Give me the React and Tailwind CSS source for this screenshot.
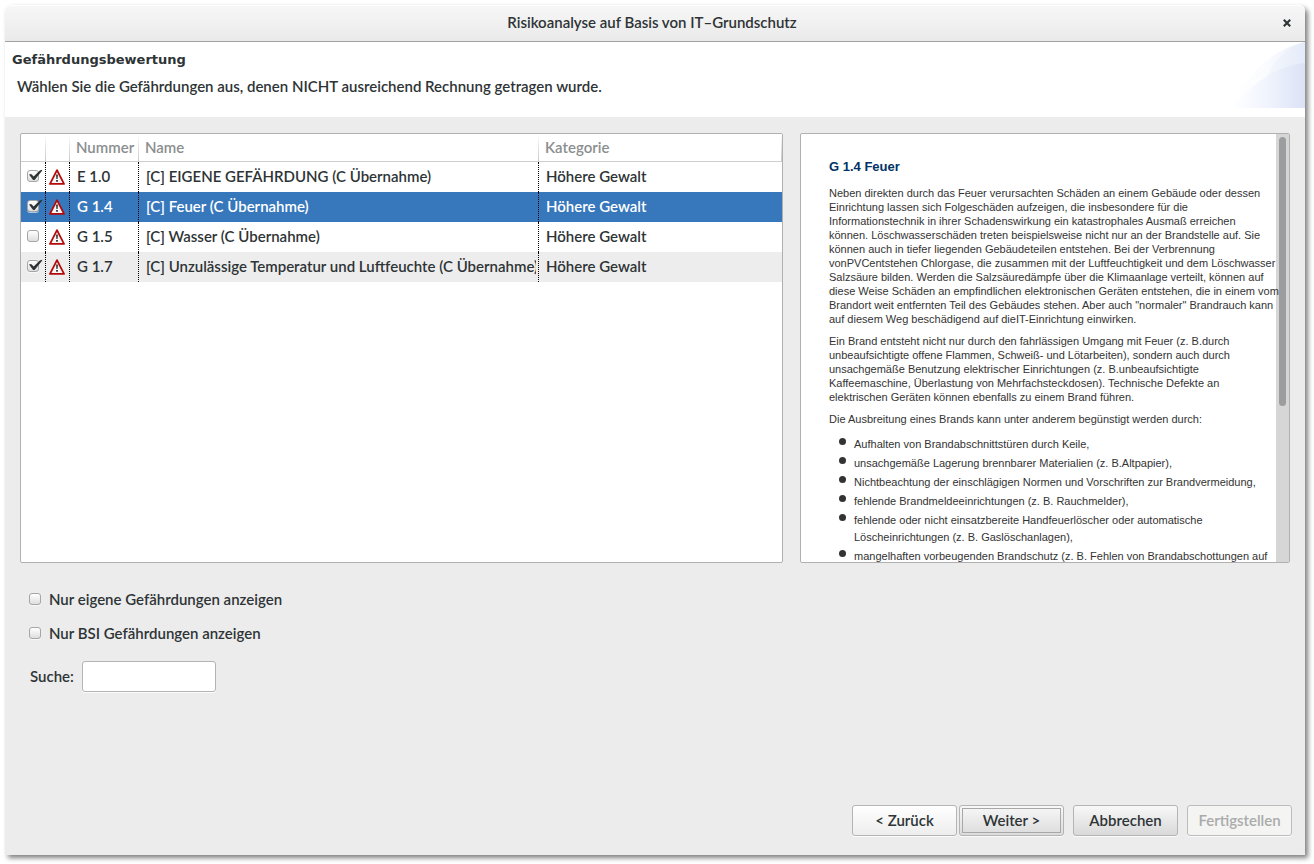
import { useState } from 'react';

const THREATS = [
  { id: 'E 1.0', name: '[C] EIGENE GEFÄHRDUNG (C Übernahme)', category: 'Höhere Gewalt', checked: true },
  { id: 'G 1.4', name: '[C] Feuer (C Übernahme)', category: 'Höhere Gewalt', checked: true },
  { id: 'G 1.5', name: '[C] Wasser (C Übernahme)', category: 'Höhere Gewalt', checked: false },
  { id: 'G 1.7', name: '[C] Unzulässige Temperatur und Luftfeuchte (C Übernahme)', category: 'Höhere Gewalt', checked: true },
];

const PARAGRAPHS = [
  [
    'Neben direkten durch das Feuer verursachten Schäden an einem Gebäude oder dessen',
    'Einrichtung lassen sich Folgeschäden aufzeigen, die insbesondere für die',
    'Informationstechnik in ihrer Schadenswirkung ein katastrophales Ausmaß erreichen',
    'können. Löschwasserschäden treten beispielsweise nicht nur an der Brandstelle auf. Sie',
    'können auch in tiefer liegenden Gebäudeteilen entstehen. Bei der Verbrennung',
    'vonPVCentstehen Chlorgase, die zusammen mit der Luftfeuchtigkeit und dem Löschwasser',
    'Salzsäure bilden. Werden die Salzsäuredämpfe über die Klimaanlage verteilt, können auf',
    'diese Weise Schäden an empfindlichen elektronischen Geräten entstehen, die in einem vom',
    'Brandort weit entfernten Teil des Gebäudes stehen. Aber auch "normaler" Brandrauch kann',
    'auf diesem Weg beschädigend auf dieIT-Einrichtung einwirken.',
  ],
  [
    'Ein Brand entsteht nicht nur durch den fahrlässigen Umgang mit Feuer (z. B.durch',
    'unbeaufsichtigte offene Flammen, Schweiß- und Lötarbeiten), sondern auch durch',
    'unsachgemäße Benutzung elektrischer Einrichtungen (z. B.unbeaufsichtigte',
    'Kaffeemaschine, Überlastung von Mehrfachsteckdosen). Technische Defekte an',
    'elektrischen Geräten können ebenfalls zu einem Brand führen.',
  ],
  ['Die Ausbreitung eines Brands kann unter anderem begünstigt werden durch:'],
];

const BULLETS = [
  ['Aufhalten von Brandabschnittstüren durch Keile,'],
  ['unsachgemäße Lagerung brennbarer Materialien (z. B.Altpapier),'],
  ['Nichtbeachtung der einschlägigen Normen und Vorschriften zur Brandvermeidung,'],
  ['fehlende Brandmeldeeinrichtungen (z. B. Rauchmelder),'],
  ['fehlende oder nicht einsatzbereite Handfeuerlöscher oder automatische', 'Löscheinrichtungen (z. B. Gaslöschanlagen),'],
  ['mangelhaften vorbeugenden Brandschutz (z. B. Fehlen von Brandabschottungen auf'],
];

function Lines({ lines }) {
  return lines.map((line) => (
    <span key={line} className="block whitespace-nowrap">
      {line}
    </span>
  ));
}

function CheckBox({ id, label, checked, onChange }) {
  return (
    <span className="relative block size-3 shrink-0">
      <input
        id={id}
        type="checkbox"
        aria-label={label}
        checked={checked}
        onChange={onChange}
        className="peer block size-3 appearance-none rounded-[3px] border border-[#a6a6a6] bg-linear-to-b from-white to-[#dedede] shadow-[0_1px_0_#ffffff99]"
      />
      <svg viewBox="0 0 15 13" className="pointer-events-none absolute -top-px left-0.5 hidden h-[13px] w-[15px] peer-checked:block" aria-hidden="true">
        <path d="M0 5.6 2.1 4.9 4.7 7.6 10.8 1.4 13.2 0.8 13.1 1.7 5.6 10.9 4.1 11Z" fill="#2e3436" />
      </svg>
    </span>
  );
}

function WarningIcon() {
  return (
    <svg viewBox="0 0 16 16" className="block size-4" role="img" aria-label="Gefährdung">
      <path d="M8 1.1 15 14.9H1Z" fill="#f6f6f6" stroke="#b40a0a" strokeWidth="1.8" strokeLinejoin="round" />
      <path d="M7.1 5.6H8.9L8.6 10H7.4Z" fill="#303030" />
      <rect x="7.1" y="11" width="1.8" height="1.7" fill="#303030" />
    </svg>
  );
}

function BannerArt() {
  return (
    <svg viewBox="0 0 74 66" className="block h-[66px] w-[74px] shrink-0" aria-hidden="true">
      <defs>
        <linearGradient id="outer">
          <stop offset="0" stopColor="#ffffff" />
          <stop offset="0.5" stopColor="#fafbfe" />
          <stop offset="1" stopColor="#e8eefa" />
        </linearGradient>
        <linearGradient id="middle">
          <stop offset="0" stopColor="#fafbfe" />
          <stop offset="1" stopColor="#e4ebf9" />
        </linearGradient>
        <linearGradient id="inner">
          <stop offset="0" stopColor="#ffffff" />
          <stop offset="0.45" stopColor="#f1f5fd" />
          <stop offset="1" stopColor="#dbe2f6" />
        </linearGradient>
      </defs>
      <path d="M1 66C14 35 38 8 74 0V66Z" fill="url(#outer)" />
      <path d="M24 66C32 36 46 7 74 0V66Z" fill="url(#middle)" />
      <path d="M1 66C20 43 42 25 74 21V66Z" fill="url(#inner)" />
    </svg>
  );
}

function HeaderCell({ children }) {
  return (
    <th scope="col" className="relative h-7 border-b border-[#cfcfcf] px-1.5 pb-0.5 text-left font-semibold text-[#8b8e8f]">
      {children}
      <span className="absolute inset-y-0 right-0 w-px bg-linear-to-b from-white to-[#c8c8c8]" />
    </th>
  );
}

const BUTTON = 'h-[31px] w-[105px] rounded-[3px] border shadow-[0_1px_0_#ffffffcc]';

export default function App() {
  const [threats, setThreats] = useState(THREATS);
  const [selected, setSelected] = useState('G 1.4');
  const [onlyOwn, setOnlyOwn] = useState(false);
  const [onlyBsi, setOnlyBsi] = useState(false);

  const toggle = (id) => setThreats(threats.map((t) => (t.id === id ? { ...t, checked: !t.checked } : t)));

  return (
    <div className="flex min-h-screen bg-white pt-[5px] pr-[9px] pb-[9px] pl-[5px] font-['Lato',sans-serif] text-[15px] leading-5 font-semibold text-[#2e3436]">
      <div className="flex min-w-0 flex-1 flex-col rounded-t-md bg-[#ececec] shadow-[3px_3px_5px_0_#00000080]">
        <div className="flex h-[37px] items-center rounded-t-md border-b border-[#a1a1a1] bg-linear-to-b from-[#f7f7f7] to-[#eaeaea] shadow-[inset_0_1px_0_#fff]">
          <h1 className="flex-1 pb-0.5 pl-[30px] text-center">Risikoanalyse auf Basis von IT–Grundschutz</h1>
          <button type="button" aria-label="Schließen" className="flex h-full w-9 items-center justify-center">
            <svg viewBox="0 0 8 8" className="size-2" aria-hidden="true">
              <path d="M0.8 0.8 7.2 7.2M7.2 0.8 0.8 7.2" stroke="#2e3436" strokeWidth="2.1" />
            </svg>
          </button>
        </div>

        <header className="flex h-[75px] items-start justify-between bg-white">
          <div className="pt-2">
            <h2 className="pl-[7px] font-['DejaVu_Sans',sans-serif] text-[13px] leading-5 font-bold">Gefährdungsbewertung</h2>
            <p className="pt-1.5 pl-3">Wählen Sie die Gefährdungen aus, denen NICHT ausreichend Rechnung getragen wurde.</p>
          </div>
          <BannerArt />
        </header>

        <main className="flex flex-1 flex-col px-[15px] pt-4">
          <div className="grid grid-cols-[763fr_490fr] gap-[17px]">
            <div className="h-[430px] min-w-0 overflow-hidden rounded-xs border border-[#b0b0b0] bg-white">
              <table className="w-full table-fixed border-separate border-spacing-0">
                <colgroup>
                  <col className="w-[25px]" />
                  <col className="w-6" />
                  <col className="w-[69px]" />
                  <col className="w-[400px]" />
                  <col />
                </colgroup>
                <thead>
                  <tr>
                    <HeaderCell />
                    <HeaderCell />
                    <HeaderCell>Nummer</HeaderCell>
                    <HeaderCell>Name</HeaderCell>
                    <HeaderCell>Kategorie</HeaderCell>
                  </tr>
                </thead>
                <tbody>
                  {threats.map((t) => (
                    <tr
                      key={t.id}
                      onClick={() => setSelected(t.id)}
                      className={t.id === selected ? 'bg-[#3777bc] text-white' : t.id === 'G 1.7' ? 'bg-[#ededed]' : 'bg-white'}
                    >
                      <td className="h-[30px] border-r border-dotted border-black pb-0.5 pl-1.5">
                        <CheckBox label={t.id} checked={t.checked} onChange={() => toggle(t.id)} />
                      </td>
                      <td className="border-r border-dotted border-black pl-[3px]">
                        <WarningIcon />
                      </td>
                      <td className="border-r border-dotted border-black pb-0.5 pl-[7px]">{t.id}</td>
                      <td className="border-r border-dotted border-black pr-0.5 pb-0.5 pl-[7px]">
                        <div className="overflow-hidden whitespace-nowrap">{t.name}</div>
                      </td>
                      <td className="pb-0.5 pl-[7px]">{t.category}</td>
                    </tr>
                  ))}
                </tbody>
              </table>
            </div>

            <div className="flex h-[430px] min-w-0 overflow-hidden rounded-xs border border-[#b0b0b0] bg-white">
              <article className="relative z-10 min-w-0 flex-1 pt-[25px] pl-7 font-['Liberation_Sans',sans-serif] text-[11px] leading-[14px] font-normal text-[#333333]">
                <h3 className="text-[13px] leading-4 font-bold text-[#003366]">G 1.4 Feuer</h3>
                <div className="flex flex-col gap-2 pt-[11px]">
                  {PARAGRAPHS.map((lines) => (
                    <p key={lines[0]}>
                      <Lines lines={lines} />
                    </p>
                  ))}
                  <ul className="flex flex-col gap-0.5 pt-0.5 leading-[17px]">
                    {BULLETS.map((lines) => (
                      <li key={lines[0]} className="flex items-start gap-2 pl-[10px]">
                        <span className="mt-0.5 size-[7px] shrink-0 rounded-full bg-[#333333]" />
                        <div>
                          <Lines lines={lines} />
                        </div>
                      </li>
                    ))}
                  </ul>
                </div>
              </article>
              <div className="w-[13px] shrink-0 bg-[#d6d6d6] px-[3px] pt-[3px]">
                <div className="h-[269px] rounded-full bg-[#9b9d9e]" />
              </div>
            </div>
          </div>

          <div className="flex flex-col items-start gap-3.5 pt-[26px] pl-[9px]">
            <div className="flex items-center gap-2">
              <CheckBox id="only-own" checked={onlyOwn} onChange={() => setOnlyOwn(!onlyOwn)} />
              <label htmlFor="only-own">Nur eigene Gefährdungen anzeigen</label>
            </div>
            <div className="flex items-center gap-2">
              <CheckBox id="only-bsi" checked={onlyBsi} onChange={() => setOnlyBsi(!onlyBsi)} />
              <label htmlFor="only-bsi">Nur BSI Gefährdungen anzeigen</label>
            </div>
            <div className="flex items-center gap-2 pt-1 pl-px">
              <label htmlFor="search" className="pb-0.5">
                Suche:
              </label>
              <input id="search" type="text" className="h-[31px] w-[134px] rounded-[3px] border border-[#b4b4b4] bg-white px-2 shadow-[0_1px_0_#ffffffcc]" />
            </div>
          </div>
        </main>

        <footer className="flex justify-end gap-[9px] pr-[13px] pb-[19px]">
          <div className="flex gap-0.5">
            <button type="button" className={`${BUTTON} border-[#b4b4b4] bg-linear-to-b from-white to-[#ededed] pb-0.5`}>
              &lt; Zurück
            </button>
            <button type="button" className={`${BUTTON} border-[#b4b4b4] bg-linear-to-b from-[#f8f8f8] to-[#dcdcdc] p-0.5`}>
              <span className="flex h-full items-center justify-center border border-[#a8a8a8] pb-0.5">Weiter &gt;</span>
            </button>
          </div>
          <button type="button" className={`${BUTTON} border-[#b4b4b4] bg-linear-to-b from-[#f8f8f8] to-[#d9d9d9] pb-0.5`}>
            Abbrechen
          </button>
          <button type="button" disabled className={`${BUTTON} border-[#bcbcbc] bg-[#f4f4f2] pb-0.5 text-[#a9abab]`}>
            Fertigstellen
          </button>
        </footer>
      </div>
    </div>
  );
}
